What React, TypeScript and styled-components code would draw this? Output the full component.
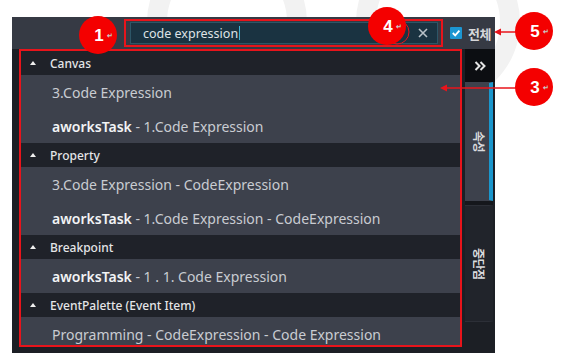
import React from "react";
import styled, { createGlobalStyle } from "styled-components";

const Global = createGlobalStyle`
  html, body { margin: 0; padding: 0; background: #ffffff; }
  body { font-family: "Noto Sans", "Noto Sans CJK KR", sans-serif; }
  * { box-sizing: border-box; }
`;

const Page = styled.div`
  position: relative;
  width: 561px;
  height: 359px;
  overflow: hidden;
  padding: 17px 0 0 12px;
`;

const Watermark = styled.svg`
  position: absolute;
  left: 0;
  top: 0;
  width: 561px;
  height: 359px;
  pointer-events: none;
`;

const Window = styled.div`
  position: relative;
  z-index: 1;
  width: 483px;
  height: 336px;
  background: #1c1f25;
  display: flex;
  flex-direction: column;
`;

const TopBar = styled.div`
  flex: none;
  height: 32px;
  background: #363a44;
  display: flex;
  align-items: center;
  padding-left: 112px;
`;

const SearchFrame = styled.div`
  width: 319px;
  height: 28px;
  border: 2px solid #e8141b;
  padding: 1px 3px 1px 4px;
`;

const SearchBox = styled.div`
  width: 308px;
  height: 22px;
  background: #1a3341;
  border: 1px solid #2d5667;
  display: flex;
  align-items: center;
  padding-left: 12px;
  font-size: 12.5px;
  color: #dfe3e6;
  white-space: pre;
`;

const Caret = styled.span`
  display: inline-block;
  width: 1px;
  height: 14px;
  margin-left: 1px;
  background: #3cb4d6;
`;

const ClearButton = styled.div`
  margin-left: auto;
  width: 28px;
  height: 20px;
  display: flex;
  align-items: center;
  justify-content: center;
`;

const CheckBox = styled.div`
  margin-left: 7px;
  width: 12px;
  height: 12px;
  background: #1c96d2;
  border-radius: 1px;
  display: flex;
  align-items: center;
  justify-content: center;
`;

const CheckLabel = styled.span`
  margin-left: 6px;
  font-family: "Noto Sans CJK KR", "Noto Sans", sans-serif;
  font-size: 13px;
  font-weight: 700;
  color: #d6d7da;
  letter-spacing: -0.5px;
`;

const Body = styled.div`
  flex: 1;
  display: flex;
  min-height: 0;
`;

const Gutter = styled.div`
  width: 7px;
  flex: none;
`;

const ResultsFrame = styled.div`
  width: 443px;
  height: 298px;
  flex: none;
  border: 2px solid #e8141b;
`;

const ResultsList = styled.div`
  height: 294px;
  overflow: hidden;
  background: #3d414c;
`;

const GroupHeader = styled.div`
  height: 24px;
  background: #1f2229;
  display: flex;
  align-items: center;
  padding-left: 9px;
  font-size: 12px;
  font-weight: 500;
  color: #e4e5e7;
`;

const Triangle = styled.span`
  width: 0;
  height: 0;
  border-left: 3px solid transparent;
  border-right: 3px solid transparent;
  border-bottom: 4px solid #f0f0f0;
  margin-right: 14px;
`;

const ItemRow = styled.div`
  height: 34px;
  background: #3d414c;
  display: flex;
  align-items: center;
  padding-left: 31px;
  font-size: 14px;
  color: #c9ccd2;
  white-space: pre;
`;

const Strong = styled.span`
  font-weight: 600;
  color: #f2f3f5;
`;

const Spacer = styled.div`
  width: 3px;
  flex: none;
`;

const SidePanel = styled.div`
  width: 30px;
  flex: none;
  display: flex;
  flex-direction: column;
`;

const ToggleBlock = styled.div`
  height: 33px;
  background: #0c0e12;
  display: flex;
  align-items: center;
  justify-content: center;
`;

const Tab = styled.div<{ $active?: boolean; $h: number }>`
  height: ${(p) => p.$h}px;
  margin-right: 2px;
  background: ${(p) => (p.$active ? "#3d414c" : "#21242b")};
  border-right: 4px solid ${(p) => (p.$active ? "#1a96cc" : "#21242b")};
  border-top: 1px solid ${(p) => (p.$active ? "#3d414c" : "#2c2f37")};
  border-bottom: 1px solid ${(p) => (p.$active ? "#3d414c" : "#2c2f37")};
  display: flex;
  align-items: center;
  justify-content: center;
  padding-left: 4px;
`;

const TabGap = styled.div`
  height: 4px;
  background: #15171c;
  margin-right: 2px;
`;

const VerticalText = styled.span`
  writing-mode: vertical-rl;
  text-orientation: sideways;
  font-family: "Noto Sans CJK KR", sans-serif;
  font-size: 12px;
  font-weight: 700;
  color: #d9dadd;
  letter-spacing: -0.5px;
`;

const Badge = styled.div<{ $x: number; $y: number }>`
  position: absolute;
  z-index: 3;
  left: ${(p) => p.$x - 19}px;
  top: ${(p) => p.$y - 19}px;
  width: 38px;
  height: 38px;
  border-radius: 50%;
  background: #f40000;
  display: flex;
  align-items: center;
  justify-content: center;
`;

const BadgeNum = styled.span`
  position: relative;
  margin-left: 2px;
  font-family: "Liberation Sans", Arial, sans-serif;
  font-weight: 700;
  font-size: 17px;
  line-height: 1;
  color: #ffffff;
`;

const BadgeMark = styled.span`
  position: absolute;
  left: calc(100% + 3px);
  top: 5px;
  font-size: 7px;
  color: #c8c8c8;
`;

const Overlay = styled.svg`
  position: absolute;
  z-index: 2;
  left: 0;
  top: 0;
  width: 561px;
  height: 359px;
  pointer-events: none;
`;

type Item = { strong?: string; text: string };
type Group = { title: string; items: Item[] };

const groups: Group[] = [
  {
    title: "Canvas",
    items: [
      { text: "3.Code Expression" },
      { strong: "aworksTask", text: " - 1.Code Expression" },
    ],
  },
  {
    title: "Property",
    items: [
      { text: "3.Code Expression - CodeExpression" },
      { strong: "aworksTask", text: " - 1.Code Expression - CodeExpression" },
    ],
  },
  {
    title: "Breakpoint",
    items: [{ strong: "aworksTask", text: " - 1 . 1. Code Expression" }],
  },
  {
    title: "EventPalette (Event Item)",
    items: [{ text: "Programming - CodeExpression - Code Expression" }],
  },
];

const badges = [
  { n: "1", x: 98, y: 35 },
  { n: "4", x: 387, y: 26 },
  { n: "5", x: 534, y: 31 },
  { n: "3", x: 534, y: 87 },
];

export default function App() {
  return (
    <>
      <Global />
      <Page>
        <Watermark viewBox="0 0 561 359">
          <circle cx="227" cy="22" r="70" fill="none" stroke="#f2f2f2" strokeWidth="20" />
          <circle cx="438" cy="22" r="72" fill="none" stroke="#f2f2f2" strokeWidth="20" />
        </Watermark>
        <Window>
          <TopBar>
            <SearchFrame>
              <SearchBox>
                code expression
                <Caret />
                <ClearButton>
                  <svg width="10" height="10" viewBox="0 0 10 10">
                    <path d="M1 1 L9 9 M9 1 L1 9" stroke="#b9c2c8" strokeWidth="1.6" />
                  </svg>
                </ClearButton>
              </SearchBox>
            </SearchFrame>
            <CheckBox>
              <svg width="10" height="10" viewBox="0 0 10 10">
                <polyline points="1.8,5 4.2,7.4 8.4,2.6" fill="none" stroke="#ffffff" strokeWidth="1.8" />
              </svg>
            </CheckBox>
            <CheckLabel>전체</CheckLabel>
          </TopBar>
          <Body>
            <Gutter />
            <ResultsFrame>
              <ResultsList>
                {groups.map((g) => (
                  <React.Fragment key={g.title}>
                    <GroupHeader>
                      <Triangle />
                      {g.title}
                    </GroupHeader>
                    {g.items.map((it, i) => (
                      <ItemRow key={i}>
                        {it.strong && <Strong>{it.strong}</Strong>}
                        {it.text}
                      </ItemRow>
                    ))}
                  </React.Fragment>
                ))}
              </ResultsList>
            </ResultsFrame>
            <Spacer />
            <SidePanel>
              <ToggleBlock>
                <svg width="12" height="10" viewBox="0 0 12 10">
                  <path d="M1.5 1 L5.5 5 L1.5 9 M6.5 1 L10.5 5 L6.5 9" fill="none" stroke="#e4e4e4" strokeWidth="2" />
                </svg>
              </ToggleBlock>
              <Tab $active $h={119}>
                <VerticalText>속성</VerticalText>
              </Tab>
              <TabGap />
              <Tab $h={117}>
                <VerticalText>중단점</VerticalText>
              </Tab>
            </SidePanel>
          </Body>
        </Window>
        <Overlay viewBox="0 0 561 359">
          <circle cx="397" cy="32" r="12" fill="none" stroke="#e8141b" strokeWidth="1" />
          <line x1="516" y1="32" x2="500" y2="32" stroke="#e8141b" strokeWidth="1.5" />
          <polygon points="494,32 501,28.5 501,35.5" fill="#e8141b" />
          <line x1="516" y1="88" x2="446" y2="88" stroke="#e8141b" strokeWidth="1.5" />
          <polygon points="440,88 447,84.5 447,91.5" fill="#e8141b" />
        </Overlay>
        {badges.map((b) => (
          <Badge key={b.n} $x={b.x} $y={b.y}>
            <BadgeNum>
              {b.n}
              <BadgeMark>↵</BadgeMark>
            </BadgeNum>
          </Badge>
        ))}
      </Page>
    </>
  );
}
